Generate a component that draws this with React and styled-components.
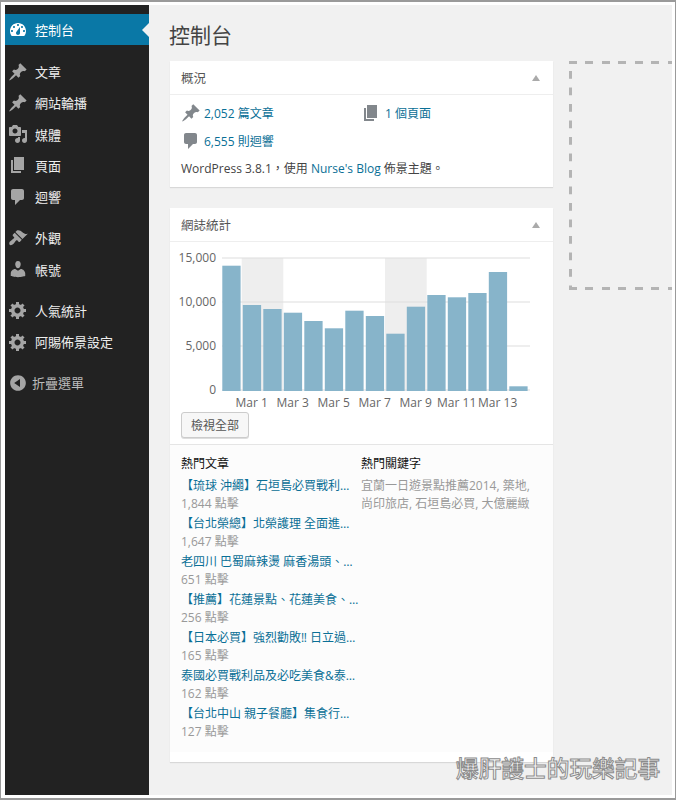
import React from "react";
import styled, { createGlobalStyle } from "styled-components";

const Global = createGlobalStyle`
  html, body { margin: 0; padding: 0; background: #fff; }
  #root { width: 676px; height: 800px; }
`;

const FONT = `"Open Sans", "Noto Sans CJK TC", sans-serif`;

const Frame = styled.div`
  box-sizing: border-box;
  position: relative;
  width: 676px;
  height: 800px;
  display: flex;
  background: #fff;
  border: 1px solid #9a9a9a;
  border-width: 2px 1px 2px 1px;
  padding: 3px 3px 3px 4px;
  font-family: ${FONT};
  font-size: 12px;
  overflow: hidden;
`;

const Sidebar = styled.nav`
  flex: none;
  width: 144px;
  background: #222;
  padding-top: 9px;
  box-sizing: border-box;
`;

const MenuGroup = styled.ul`
  list-style: none;
  margin: 0 0 10px;
  padding: 0;
  display: flex;
  flex-direction: column;
  &:first-child { margin-bottom: 11px; }
`;

const MenuItem = styled.li`
  position: relative;
  display: flex;
  align-items: center;
  gap: ${(p) => (p.$muted ? "4px" : "7px")};
  height: ${(p) => (p.$active ? "31px" : "31.25px")};
  padding-left: 3px;
  font-size: 13px;
  color: ${(p) => (p.$active ? "#fff" : p.$muted ? "#bbb" : "#eee")};
  background: ${(p) => (p.$active ? "#0a78a6" : "transparent")};
  svg { fill: ${(p) => (p.$active ? "#fff" : "#a5a5a5")}; }
`;

const ActiveArrow = styled.span`
  position: absolute;
  right: 0;
  top: 9px;
  width: 0;
  height: 0;
  border: 7px solid transparent;
  border-left-width: 0;
  border-right-color: #f1f1f1;
`;

const Main = styled.main`
  flex: 1;
  min-width: 0;
  background: #f1f1f1;
  padding: 0 0 0 21px;
  overflow: hidden;
`;

const Title = styled.h1`
  margin: 0 0 0 -1px;
  height: 56px;
  display: flex;
  align-items: center;
  padding-top: 2px;
  box-sizing: border-box;
  font-size: 21px;
  font-weight: 400;
  color: #444;
`;

const Columns = styled.div`
  display: flex;
  align-items: flex-start;
  gap: 16px;
`;

const Column = styled.div`
  flex: none;
  width: 383px;
  display: flex;
  flex-direction: column;
  gap: 21px;
`;

const Card = styled.section`
  background: #fff;
  box-shadow: 0 1px 1px rgba(0, 0, 0, 0.1);
  padding-bottom: ${(p) => p.$pad || 0}px;
`;

const CardHeader = styled.header`
  display: flex;
  align-items: center;
  justify-content: space-between;
  height: 33px;
  padding: 0 13px 0 11px;
  border-bottom: 1px solid #eee;
  font-size: 12.5px;
  color: #555;
`;

const Toggle = styled.span`
  width: 0;
  height: 0;
  border: 4px solid transparent;
  border-top-width: 0;
  border-bottom: 6px solid #aaa;
`;

const Overview = styled.div`
  padding: 4px 11px 0;
  height: 92px;
  box-sizing: border-box;
`;

const StatGrid = styled.div`
  display: grid;
  grid-template-columns: 180px 180px;
  grid-auto-rows: 28px;
`;

const Stat = styled.a`
  display: flex;
  align-items: center;
  gap: ${(p) => p.$gap || 3}px;
  color: #0a6f96;
  svg { fill: #82878c; flex: none; }
`;

const Version = styled.p`
  margin: 5px 0 0;
  line-height: 18px;
  color: #444;
`;

const ThemeLink = styled.a`
  color: #0a6f96;
`;

const ChartSvg = styled.svg`
  display: block;
  text {
    font-family: ${FONT};
    font-size: 12px;
    fill: #666;
  }
`;

const ViewAll = styled.button`
  display: block;
  box-sizing: border-box;
  margin: 0 0 6px 11px;
  width: 68px;
  height: 26px;
  padding: 0;
  background: #f7f7f7;
  border: 1px solid #ccc;
  border-radius: 3px;
  box-shadow: 0 1px 0 #ddd;
  font-family: ${FONT};
  font-size: 12px;
  color: #555;
`;

const Popular = styled.div`
  display: grid;
  grid-template-columns: 180px 1fr;
  height: 308px;
  box-sizing: border-box;
  padding: 10px 11px 0;
  background: #fcfcfc;
  border-top: 1px solid #e5e5e5;
`;

const ListTitle = styled.h4`
  margin: 0 0 4px;
  font-size: 12px;
  font-weight: 400;
  line-height: 18px;
  color: #111;
`;

const PostList = styled.ol`
  list-style: none;
  margin: 0;
  padding: 0;
  display: flex;
  flex-direction: column;
  gap: 2px;
`;

const Post = styled.li`
  line-height: 18px;
  white-space: nowrap;
`;

const PostLink = styled.a`
  display: block;
  color: #0a6f96;
`;

const Hits = styled.span`
  display: block;
  color: #999;
`;

const Keywords = styled.p`
  margin: 0;
  width: 175px;
  line-height: 18px;
  color: #999;
`;

const Placeholder = styled.div`
  flex: none;
  width: 130px;
  height: 229px;
  background:
    repeating-linear-gradient(90deg, #b4b4b4 0 8px, transparent 8px 16.5px) top / 100% 3px no-repeat,
    repeating-linear-gradient(90deg, #b4b4b4 0 8px, transparent 8px 16.5px) bottom / 100% 3px no-repeat,
    linear-gradient(180deg, #b4b4b4 0 8px, transparent 8px) left 0 top 10px / 3px 16.5px repeat-y;
`;

const Watermark = styled.div`
  position: absolute;
  left: 455px;
  top: 753px;
  font-family: ${FONT};
  font-size: 22.7px;
  font-weight: 500;
  line-height: 28px;
  white-space: nowrap;
  color: #fafafa;
  -webkit-text-stroke: 1px #8c8c8c;
`;

const Icon = ({ d, size = 20 }) => (
  <svg width={size} height={size} viewBox="0 0 20 20" aria-hidden="true">
    <path d={d} fillRule="evenodd" />
  </svg>
);

const I = {
  dash: "M3.76 16h12.48c1.1-1.37 1.76-3.11 1.76-5 0-4.42-3.58-8-8-8s-8 3.58-8 8c0 1.89.66 3.63 1.76 5zM10 4c.55 0 1 .45 1 1s-.45 1-1 1-1-.45-1-1 .45-1 1-1zM6 6c.55 0 1 .45 1 1s-.45 1-1 1-1-.45-1-1 .45-1 1-1zm8 0c.55 0 1 .45 1 1s-.45 1-1 1-1-.45-1-1 .45-1 1-1zm-5.37 5.55L12 7v6c0 1.1-.9 2-2 2s-2-.9-2-2c0-.57.24-1.08.63-1.45zM4 10c.55 0 1 .45 1 1s-.45 1-1 1-1-.45-1-1 .45-1 1-1zm12 0c.55 0 1 .45 1 1s-.45 1-1 1-1-.45-1-1 .45-1 1-1z",
  pin: "M10.44 3.02l1.82-1.82 6.36 6.35-1.83 1.82c-1.05-.68-2.48-.57-3.41.36l-.75.75c-.92.93-1.04 2.35-.35 3.41l-1.83 1.82-2.41-2.41-2.8 2.79c-.42.42-3.38 2.71-3.8 2.29s1.86-3.39 2.28-3.81l2.79-2.79L4.1 9.36l1.83-1.82c1.05.69 2.48.57 3.4-.36l.75-.75c.93-.92 1.05-2.35.36-3.41z",
  media: "M13 11V4c0-.55-.45-1-1-1h-1.67L9 1H5L3.67 3H2c-.55 0-1 .45-1 1v7c0 .55.45 1 1 1h10c.55 0 1-.45 1-1zM7 4.5c1.38 0 2.5 1.12 2.5 2.5S8.38 9.5 7 9.5 4.5 8.38 4.5 7 5.62 4.5 7 4.5zM14 6h5v10.5c0 1.38-1.12 2.5-2.5 2.5S14 17.88 14 16.5s1.12-2.5 2.5-2.5c.17 0 .34.02.5.05V9h-3V6zm-4 8.05V13h2v3.5c0 1.38-1.12 2.5-2.5 2.5S7 17.88 7 16.5 8.12 14 9.5 14c.17 0 .34.02.5.05z",
  page: "M6 15V2h10v13H6zm-1 1h8v2H3V5h2v11z",
  comment: "M5 2h9c1.1 0 2 .9 2 2v7c0 1.1-.9 2-2 2h-2l-5 5v-5H5c-1.1 0-2-.9-2-2V4c0-1.1.9-2 2-2z",
  brush: "M14.48 11.06L7.41 3.99l1.5-1.5c.5-.56 2.3-.47 3.51.32 1.21.8 1.43 1.28 2.91 2.1 1.18.64 2.45 1.26 4.45.85zm-.71.71L6.7 4.7 4.93 6.47c-.39.39-.39 1.02 0 1.41l1.06 1.06c.39.39.39 1.03 0 1.42-.6.6-1.43 1.11-2.21 1.69-.35.26-.7.53-1.01.84C1.43 13.23.87 15.31 1.5 16.5c.63 1.19 2.71.63 4.05-.71.31-.31.58-.66.84-1.01.58-.78 1.09-1.61 1.69-2.21.39-.39 1.03-.39 1.42 0l1.06 1.06c.39.39 1.02.39 1.41 0z",
  user: "M10 9.25c-2.27 0-2.73-3.44-2.73-3.44C7 4.02 7.82 2 9.97 2c2.16 0 2.98 2.02 2.71 3.81 0 0-.41 3.44-2.68 3.44zm0 2.57L12.72 10c2.39 0 4.52 2.33 4.52 4.53v2.49s-3.65 1.13-7.24 1.13c-3.65 0-7.24-1.13-7.24-1.13v-2.49c0-2.25 1.94-4.48 4.47-4.48z",
  gear: "M18 12h-2.18c-.17.7-.44 1.35-.81 1.93l1.54 1.54-2.1 2.1-1.54-1.54c-.58.36-1.23.63-1.91.79V19H8v-2.18c-.68-.16-1.33-.43-1.91-.79l-1.54 1.54-2.12-2.12 1.54-1.54c-.36-.58-.63-1.23-.79-1.91H1V9.03h2.17c.16-.7.44-1.35.8-1.94L2.43 5.55l2.1-2.1 1.54 1.54c.58-.37 1.24-.64 1.93-.81V2h3v2.18c.68.16 1.33.43 1.91.79l1.54-1.54 2.12 2.12-1.54 1.54c.36.59.64 1.24.8 1.94H18V12zm-8.5 1.5c1.66 0 3-1.34 3-3s-1.34-3-3-3-3 1.34-3 3 1.34 3 3 3z",
  collapse: "M10 2.16c4.33 0 7.84 3.51 7.84 7.84s-3.51 7.84-7.84 7.84S2.16 14.33 2.16 10 5.67 2.16 10 2.16zm2 11.72V6.12L6.18 10z",
};

const menu = [
  [{ icon: "dash", label: "控制台", active: true }],
  [
    { icon: "pin", label: "文章" },
    { icon: "pin", label: "網站輪播" },
    { icon: "media", label: "媒體" },
    { icon: "page", label: "頁面" },
    { icon: "comment", label: "迴響" },
  ],
  [
    { icon: "brush", label: "外觀" },
    { icon: "user", label: "帳號" },
  ],
  [
    { icon: "gear", label: "人氣統計" },
    { icon: "gear", label: "阿賜佈景設定" },
  ],
  [{ icon: "collapse", label: "折疊選單", muted: true }],
];

const bars = [264.7, 304, 308, 311.7, 320, 327.3, 309.7, 315, 332.7, 305.7, 294, 296.3, 292, 271, 385.3];
const yTicks = [
  ["15,000", 257],
  ["10,000", 301],
  ["5,000", 345],
  ["0", 389],
];
const xTicks = ["Mar 1", "Mar 3", "Mar 5", "Mar 7", "Mar 9", "Mar 11", "Mar 13"];

const Chart = () => (
  <ChartSvg width="383" height="170" viewBox="170 241 383 170">
    <rect x="241.7" y="257" width="41.6" height="133" fill="#eee" />
    <rect x="385" y="257" width="41.7" height="133" fill="#eee" />
    {yTicks.map(([label, y]) => (
      <g key={label}>
        <rect x="222" y={y - 0.5} width="308" height="1" fill="#ddd" />
        <text x="216" y={y + 4} textAnchor="end">{label}</text>
      </g>
    ))}
    {bars.map((top, i) => (
      <rect key={i} x={222.3 + 20.5 * i} y={top} width="18.3" height={390 - top} fill="#87b4ca" />
    ))}
    {xTicks.map((label, i) => (
      <text key={label} x={251.7 + 41 * i} y="406" textAnchor="middle">{label}</text>
    ))}
  </ChartSvg>
);

const posts = [
  ["【琉球 沖繩】石垣島必買戰利…", "1,844 點擊"],
  ["【台北榮總】北榮護理 全面進…", "1,647 點擊"],
  ["老四川 巴蜀麻辣燙 麻香湯頭、…", "651 點擊"],
  ["【推薦】花蓮景點、花蓮美食、…", "256 點擊"],
  ["【日本必買】強烈勸敗‼ 日立過…", "165 點擊"],
  ["泰國必買戰利品及必吃美食&泰…", "162 點擊"],
  ["【台北中山 親子餐廳】集食行…", "127 點擊"],
];

export default function App() {
  return (
    <>
      <Global />
      <Frame>
        <Sidebar>
          {menu.map((group, g) => (
            <MenuGroup key={g}>
              {group.map((item) => (
                <MenuItem key={item.label} $active={item.active} $muted={item.muted}>
                  <Icon d={I[item.icon]} />
                  {item.label}
                  {item.active && <ActiveArrow />}
                </MenuItem>
              ))}
            </MenuGroup>
          ))}
        </Sidebar>
        <Main>
          <Title>控制台</Title>
          <Columns>
            <Column>
              <Card>
                <CardHeader>概況<Toggle /></CardHeader>
                <Overview>
                  <StatGrid>
                    <Stat><Icon d={I.pin} />2,052 篇文章</Stat>
                    <Stat $gap={4}><Icon d={I.page} />1 個頁面</Stat>
                    <Stat><Icon d={I.comment} />6,555 則迴響</Stat>
                  </StatGrid>
                  <Version>WordPress 3.8.1，使用 <ThemeLink>Nurse's Blog</ThemeLink> 佈景主題。</Version>
                </Overview>
              </Card>
              <Card $pad={10}>
                <CardHeader>網誌統計<Toggle /></CardHeader>
                <Chart />
                <ViewAll>檢視全部</ViewAll>
                <Popular>
                  <div>
                    <ListTitle>熱門文章</ListTitle>
                    <PostList>
                      {posts.map(([title, hits]) => (
                        <Post key={title}>
                          <PostLink>{title}</PostLink>
                          <Hits>{hits}</Hits>
                        </Post>
                      ))}
                    </PostList>
                  </div>
                  <div>
                    <ListTitle>熱門關鍵字</ListTitle>
                    <Keywords>宜蘭一日遊景點推薦2014, 築地, 尚印旅店, 石垣島必買, 大億麗緻</Keywords>
                  </div>
                </Popular>
              </Card>
            </Column>
            <Placeholder />
          </Columns>
        </Main>
        <Watermark>爆肝護士的玩樂記事</Watermark>
      </Frame>
    </>
  );
}
